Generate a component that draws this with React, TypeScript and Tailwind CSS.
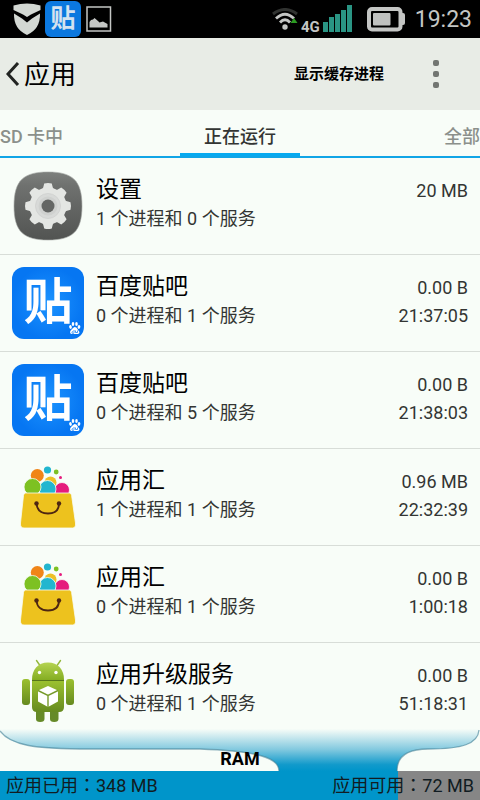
import { useState } from "react";
import type { ReactNode } from "react";

type IconName = "settings" | "tieba" | "appchina" | "android";

const processes: { name: string; detail: string; size: string; time?: string; icon: IconName }[] = [
  { name: "设置", detail: "1 个进程和 0 个服务", size: "20 MB", icon: "settings" },
  { name: "百度贴吧", detail: "0 个进程和 1 个服务", size: "0.00 B", time: "21:37:05", icon: "tieba" },
  { name: "百度贴吧", detail: "0 个进程和 5 个服务", size: "0.00 B", time: "21:38:03", icon: "tieba" },
  { name: "应用汇", detail: "1 个进程和 1 个服务", size: "0.96 MB", time: "22:32:39", icon: "appchina" },
  { name: "应用汇", detail: "0 个进程和 1 个服务", size: "0.00 B", time: "1:00:18", icon: "appchina" },
  { name: "应用升级服务", detail: "0 个进程和 1 个服务", size: "0.00 B", time: "51:18:31", icon: "android" },
];

const tabs = [
  { label: "SD 卡中", place: "flex-[3] text-left" },
  { label: "正在运行", place: "flex-[2] text-center" },
  { label: "全部", place: "flex-[3] text-right" },
];

const ram = { used: 348, free: 72 };

const SettingsIcon = () => (
  <svg viewBox="0 0 72 72" className="w-full h-full">
    <defs>
      <linearGradient id="gearBg" x1="0" y1="0" x2="0" y2="1">
        <stop offset="0" stopColor="#7d807d" />
        <stop offset="0.2" stopColor="#6f716f" />
        <stop offset="1" stopColor="#525452" />
      </linearGradient>
      <linearGradient id="gearFg" x1="0" y1="13" x2="0" y2="59" gradientUnits="userSpaceOnUse">
        <stop offset="0" stopColor="#ebecea" />
        <stop offset="1" stopColor="#dddfdd" />
      </linearGradient>
    </defs>
    <path d="M36 2C60 2 70 10 70 36S60 70 36 70 2 62 2 36 12 2 36 2Z" fill="url(#gearBg)" stroke="#a3a6a3" strokeWidth="0.600" />
    <circle cx="36" cy="36" r="18.500" fill="url(#gearFg)" />
    {[0, 45, 90, 135, 180, 225, 270, 315].map((a) => (
      <path key={a} d="M27 21Q31 20 31.600 16L32.200 13.500Q36 12.500 39.800 13.500L40.400 16Q41 20 45 21L40 26H32Z" fill="#e4e6e3" transform={`rotate(${a} 36 36)`} />
    ))}
    <circle cx="36" cy="36" r="12.500" fill="#d8dad8" stroke="#cfd1cf" strokeWidth="0.800" />
    <circle cx="36" cy="36" r="9.500" fill="#cfd1cf" />
    <circle cx="36" cy="36" r="6.500" fill="#646664" />
  </svg>
);

const TiebaIcon = () => (
  <svg viewBox="0 0 72 72" className="w-full h-full">
    <defs>
      <radialGradient id="tiebaBg">
        <stop offset="0" stopColor="#1c93ff" />
        <stop offset="1" stopColor="#0676f2" />
      </radialGradient>
    </defs>
    <rect width="72" height="72" rx="12" fill="url(#tiebaBg)" />
    <text x="36" y="52" textAnchor="middle" fontSize="49" fontWeight="700" fill="#fff">贴</text>
    <g fill="#fff">
      <ellipse cx="58.500" cy="60" rx="1.300" ry="1.900" transform="rotate(-18 58.500 60)" />
      <ellipse cx="61" cy="57" rx="1.300" ry="2" />
      <ellipse cx="64.500" cy="57" rx="1.300" ry="2" />
      <ellipse cx="67" cy="60" rx="1.300" ry="1.900" transform="rotate(18 67 60)" />
      <path d="M62.700 60Q64.500 60 65.500 62T67.500 65Q67.500 67.500 65 67H60.500Q58 67.500 58 65 58 64 60 62T62.700 60Z" />
    </g>
    <path d="M61 64.500a1 1 0 1 0 1 1v-2.500M63.500 63.500v2h2v-2" fill="none" stroke="#1680f5" strokeWidth="0.800" />
  </svg>
);

const AppChinaIcon = () => (
  <svg viewBox="0 0 72 72" className="w-full h-full">
    <circle cx="38.500" cy="21.500" r="6" fill="#edc026" />
    <circle cx="25.300" cy="14.500" r="6.500" fill="#f08518" />
    <circle cx="35.500" cy="9" r="3.600" fill="#22b6cf" />
    <circle cx="44.200" cy="11" r="2.400" fill="#7dc122" />
    <circle cx="48.500" cy="16.500" r="1.500" fill="#e51c7d" />
    <g stroke="#f8fdf8" strokeWidth="0.800">
      <circle cx="50" cy="29" r="7.500" fill="#e51c7d" />
      <circle cx="35.500" cy="28" r="8.500" fill="#22b6cf" />
      <circle cx="20.500" cy="26" r="8.500" fill="#7dc122" />
    </g>
    <path d="M13.500 32H57.500Q59.300 32 59.600 34.500L63.500 62Q64 67 60.500 67H12Q8 67 8.500 62L11.500 34.500Q11.800 32 13.500 32Z" fill="#edc21e" stroke="#f8fdf8" strokeWidth="0.800" />
    <path d="M24.500 42.500C25 49 29 52.500 36 52.500S47 49 47 42.500" fill="none" stroke="#4d2612" strokeWidth="1.800" />
    <circle cx="24.500" cy="42.500" r="2.200" fill="#4d2612" />
    <circle cx="47" cy="42.500" r="2.200" fill="#4d2612" />
  </svg>
);

const AndroidIcon = () => (
  <svg viewBox="0 0 72 72" className="w-full h-full">
    <defs>
      <linearGradient id="droidHead" x1="0" y1="0" x2="0" y2="1">
        <stop offset="0" stopColor="#b5d452" />
        <stop offset="1" stopColor="#84ad22" />
      </linearGradient>
      <linearGradient id="droidBody" x1="0" y1="0" x2="0" y2="1">
        <stop offset="0" stopColor="#9bc02f" />
        <stop offset="1" stopColor="#668a20" />
      </linearGradient>
    </defs>
    <path d="M24.500 5.500L29 12M48.500 5.500L44 12" stroke="#94b83b" strokeWidth="1.400" strokeLinecap="round" />
    <path d="M24 54H32.500V64Q32.500 67 28.200 67T24 64ZM38 54H46.500V64Q46.500 67 42.200 67T38 64Z" fill="#668a28" />
    <g fill="url(#droidBody)">
      <rect x="10" y="24" width="8" height="26" rx="3" />
      <rect x="54" y="24" width="8" height="26" rx="3" />
      <path d="M20 26H52V52Q52 57 47 57H25Q20 57 20 52Z" />
    </g>
    <path d="M20 25C20 14 26 7.500 36 7.500S52 14 52 25Z" fill="url(#droidHead)" />
    <path d="M20 25.500H52" stroke="#57751b" strokeWidth="1" />
    <circle cx="27.500" cy="17.500" r="1.700" fill="#fff" />
    <circle cx="44" cy="17.500" r="1.700" fill="#fff" />
    <path d="M36 31L46 35.500V46.500L36 52 26 46.500V35.500Z" fill="#fff" />
    <path d="M26 35.500L36 40.500 46 35.500M36 40.500V52" fill="none" stroke="#789b2b" strokeWidth="1.400" />
  </svg>
);

const icons: Record<IconName, ReactNode> = {
  settings: <SettingsIcon />,
  tieba: <TiebaIcon />,
  appchina: <AppChinaIcon />,
  android: <AndroidIcon />,
};

const StatusBar = () => (
  <div className="h-[38px] bg-black flex items-center justify-between pl-3 pr-2 text-[#c4c6c4]">
    <div className="flex items-center gap-[3px]">
      <svg viewBox="0 0 30 34" className="w-[30px] h-[34px]">
        <path d="M1.500 3.500Q15-.5 28.500 3.500V8L19 12.500 15 15 11 12.500 1.500 8Z" fill="#d3d8d3" />
        <path d="M2 11.500L10 16.500 15 20.500 20 16.500 28 11.500Q28.500 27 15 33 1.500 27 2 11.500Z" fill="#d3d8d3" />
      </svg>
      <svg viewBox="0 0 36 36" className="w-9 h-9">
        <rect width="36" height="36" rx="6" fill="#0b78df" />
        <text x="18" y="26" textAnchor="middle" fontSize="25" fontWeight="700" fill="#d4e2ef">贴</text>
      </svg>
      <svg viewBox="0 0 26 26" className="ml-[2px] w-[26px] h-[26px]">
        <rect x="1" y="1" width="23.500" height="24" fill="none" stroke="#c4c6c4" strokeWidth="1.500" />
        <path d="M3.500 21.500V16L5 14 7 13.500 8.500 12 12 15 13.500 16.500 17 15.500 21.500 18V21.500Z" fill="#c4c6c4" />
      </svg>
    </div>
    <div className="flex items-center">
      <svg viewBox="0 0 26 22" className="w-[26px] h-[22px]">
        <g fill="none">
          <path d="M1 6Q13-3 25 6" stroke="#303230" strokeWidth="3" />
          <path d="M4 10.500Q13 2 22 10.500M8 14.500Q13 9 18 14.500" stroke="#c4c6c4" strokeWidth="2.800" />
        </g>
        <circle cx="13" cy="19" r="2.700" fill="#c4c6c4" />
        <path d="M18.500 15L22 10 25.500 15Z" fill="#2b9b22" />
      </svg>
      <span className="ml-[3px] pt-4 text-[15px] leading-4 font-bold">4G</span>
      <svg viewBox="0 0 30 28" className="ml-[3px] w-[30px] h-7">
        <g fill="#2a9584">
          <rect x="0" y="17" width="5" height="10" />
          <rect x="6" y="12" width="5" height="15" />
          <rect x="12" y="9" width="5" height="18" />
          <rect x="18" y="5" width="5" height="22" />
          <rect x="24" y="0" width="5" height="27" />
        </g>
      </svg>
      <svg viewBox="0 0 38 26" className="ml-[14px] w-[38px] h-[26px]">
        <rect x="2" y="3" width="31.500" height="20.500" rx="3" fill="none" stroke="#c4c6c4" strokeWidth="4" />
        <path d="M34 7H36Q38 7 38 9V17Q38 19 36 19H34Z" fill="#c4c6c4" />
        <rect x="6" y="7" width="17.500" height="12.500" rx="1" fill="#bfc1bf" />
      </svg>
      <span className="ml-[10px] pt-[2px] text-[23px] leading-8">19:23</span>
    </div>
  </div>
);

const RamPanel = () => (
  <footer className="relative -mt-3">
    <div className="relative h-[43px]">
      <svg viewBox="0 0 480 43" preserveAspectRatio="none" className="block w-full h-full">
        <defs>
          <linearGradient id="ramFade" x1="0" y1="0" x2="0" y2="43" gradientUnits="userSpaceOnUse">
            <stop offset="0.020" stopColor="#f8fdf8" />
            <stop offset="0.500" stopColor="#82c9df" />
            <stop offset="0.850" stopColor="#129acb" />
            <stop offset="1" stopColor="#0095ca" />
          </linearGradient>
        </defs>
        <rect width="480" height="43" fill="#f8fdf8" />
        <path d="M0 0V3C10 17 33 21 90 21H200C255 23 279 29 279 43H397C397 29 406 21 428 21 462 21 478 16 479 2V0Z" fill="url(#ramFade)" />
        <path d="M0 3C10 17 33 21 90 21H200C255 23 279 29 279 43" fill="none" stroke="#437f94" strokeOpacity="0.600" strokeWidth="1.300" />
        <path d="M397 43C397 29 406 21 428 21 462 21 478 16 479 2" fill="none" stroke="#437f94" strokeOpacity="0.600" strokeWidth="1.300" />
      </svg>
      <strong className="absolute inset-x-0 bottom-0 text-center text-[18px] leading-6 font-bold text-black">RAM</strong>
    </div>
    <div className="relative h-[29px] bg-[#868686]">
      <div className="absolute inset-y-0 left-0 bg-[#0095ca]" style={{ width: `${(ram.used / (ram.used + ram.free)) * 100}%` }} />
      <div className="relative flex justify-between px-[6px] text-[18px] leading-[30px] text-[#111c22] font-[Roboto,'Noto_Sans_CJK_TC',sans-serif]">
        <span>应用已用：{ram.used} MB</span>
        <span>应用可用：{ram.free} MB</span>
      </div>
    </div>
  </footer>
);

export default function App() {
  const [active, setActive] = useState(1);

  return (
    <div className="min-h-screen flex flex-col bg-[#f8fdf8] text-[#333533] font-[Roboto,'Noto_Sans_CJK_SC',sans-serif]">
      <StatusBar />

      <header className="h-[72px] bg-[#e8ece6] flex items-center justify-between pl-[6px] pr-6 text-black">
        <button className="flex items-center gap-1">
          <svg viewBox="0 0 14 24" className="w-[14px] h-6">
            <path d="M12 1L2 12 12 23" fill="none" stroke="#222422" strokeWidth="3" />
          </svg>
          <h1 className="pt-[2px] text-[26px] leading-9">应用</h1>
        </button>
        <div className="flex items-center gap-8">
          <button className="text-[15px] leading-6 font-bold">显示缓存进程</button>
          <button aria-label="更多" className="w-10 h-10 flex flex-col items-center justify-center gap-[5px]">
            <span className="w-[6px] h-[6px] rounded-xs bg-[#727672]" />
            <span className="w-[6px] h-[6px] rounded-xs bg-[#727672]" />
            <span className="w-[6px] h-[6px] rounded-xs bg-[#727672]" />
          </button>
        </div>
      </header>

      <nav className="h-12 flex border-b-2 border-[#11a5e6]">
        {tabs.map((t, i) => (
          <button key={t.label} onClick={() => setActive(i)}
            className={`${t.place} pt-[10px] text-[18px] leading-6 font-medium border-b-3 ${i === active ? "border-[#06aaf0] text-[#333533]" : "border-transparent text-[#8b908b]"}`}>
            {t.label}
          </button>
        ))}
      </nav>

      <ul className="grow">
        {processes.map((p, i) => (
          <li key={i} className="h-[97px] flex gap-3 px-3 pt-3 border-b border-[#d8ddd8]">
            <div className="w-[72px] h-[72px] shrink-0">{icons[p.icon]}</div>
            <div className="grow pt-1">
              <h2 className="text-[23px] leading-8 text-black">{p.name}</h2>
              <p className="text-[18px] leading-[26px]">{p.detail}</p>
            </div>
            <div className="pt-[7px] text-right text-[18px] leading-7">
              <p>{p.size}</p>
              {p.time && <p>{p.time}</p>}
            </div>
          </li>
        ))}
      </ul>

      <RamPanel />
    </div>
  );
}
